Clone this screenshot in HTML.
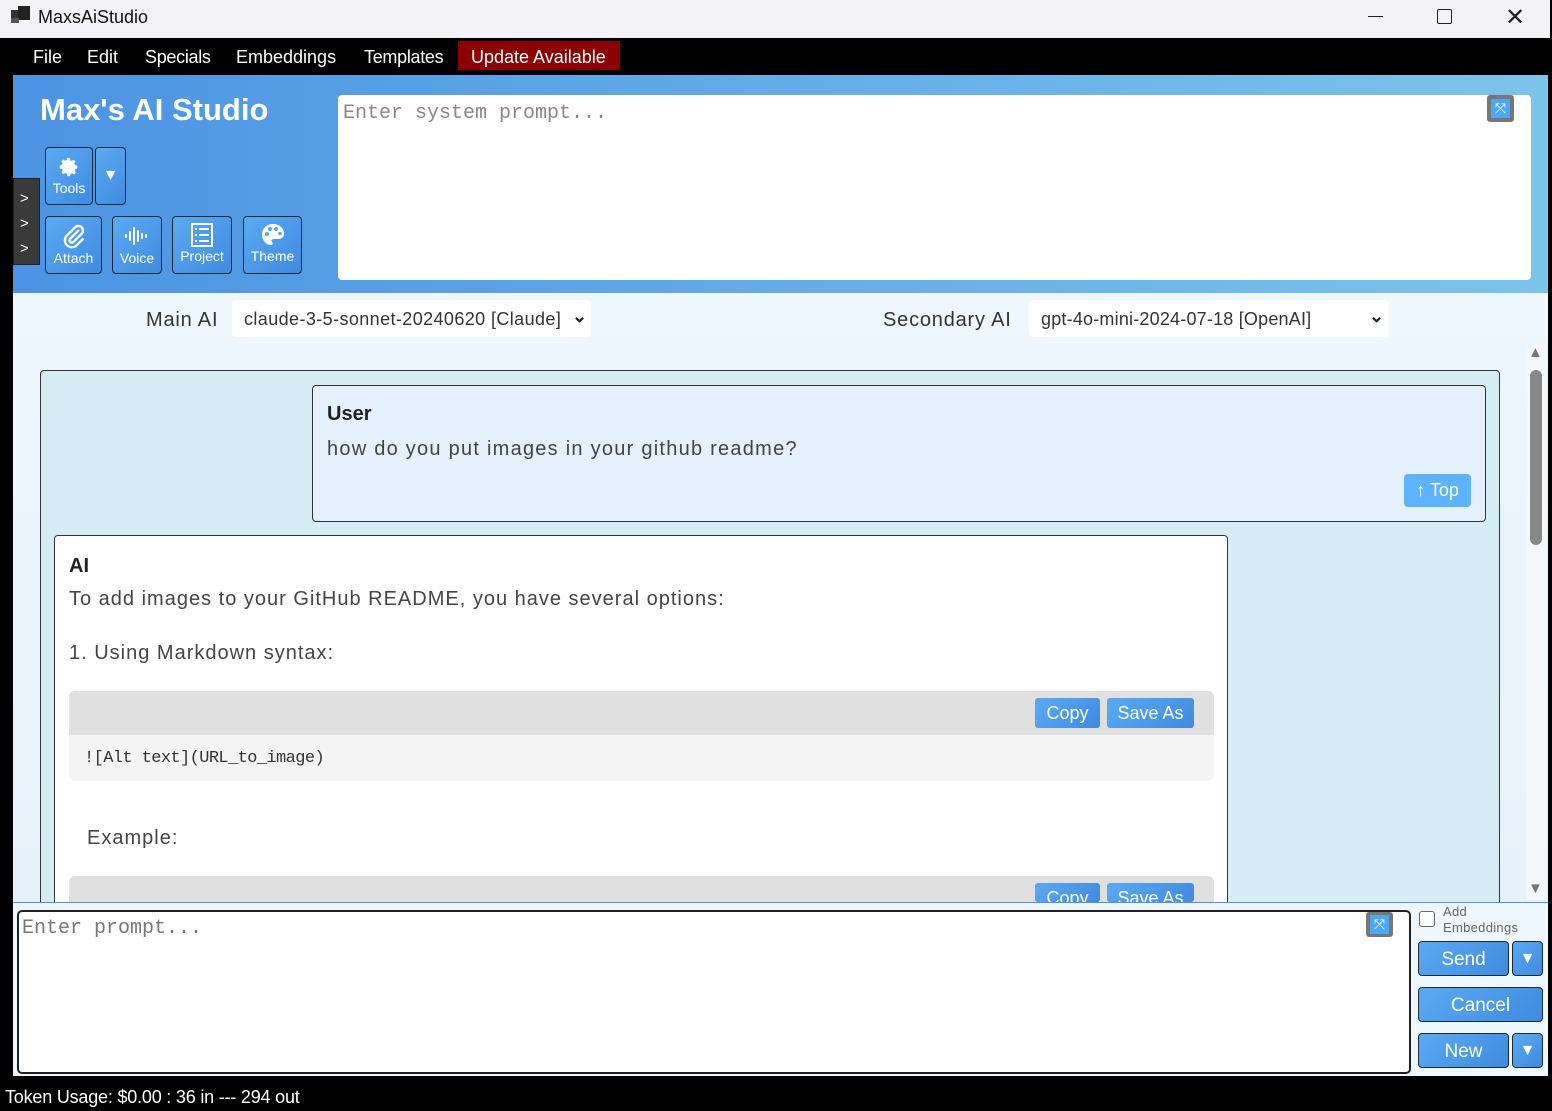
<!DOCTYPE html>
<html><head><meta charset="utf-8"><style>
*{box-sizing:border-box;margin:0;padding:0}
body{width:1552px;height:1111px;overflow:hidden;position:relative;background:#000;font-family:"Liberation Sans",sans-serif}
.abs{position:absolute}
.btn{position:absolute;background:linear-gradient(135deg,#5aaaf2,#3f8be0);border:1px solid #1a2a3a;border-radius:4px;color:#fff;text-align:center}
.cb{position:absolute;background:linear-gradient(135deg,#5aaaf2,#3f8be0);border-radius:3px;color:#fff;font-size:18px;text-align:center;line-height:30px;height:30px}
.mono{font-family:"Liberation Mono",monospace}
.t{letter-spacing:1px}
svg{display:block;margin:0 auto}
</style></head><body>
<!-- title bar -->
<div class="abs" style="left:0;top:0;width:1550px;height:38px;background:#f3f2f7"></div>
<div class="abs" style="left:11px;top:10px;width:8px;height:8px;background:#333"></div>
<div class="abs" style="left:18px;top:6px;width:12px;height:14px;background:#222"></div>
<div class="abs" style="left:11px;top:18px;width:8px;height:5px;background:#555"></div>
<div class="abs" style="left:38px;top:7px;font-size:18px;color:#111">MaxsAiStudio</div>
<div class="abs" style="left:1368px;top:16px;width:15px;height:1px;background:#222"></div>
<div class="abs" style="left:1437px;top:9px;width:15px;height:15px;border:1.5px solid #222;border-radius:2px"></div>
<div class="abs" style="left:1505px;top:3px;font-size:24px;color:#222">✕</div>
<!-- menu -->
<div class="abs" style="left:33px;top:47px;font-size:18px;color:#fff">File</div>
<div class="abs" style="left:87px;top:47px;font-size:18px;color:#fff">Edit</div>
<div class="abs" style="left:145px;top:47px;font-size:18px;color:#fff;letter-spacing:-0.3px">Specials</div>
<div class="abs" style="left:236px;top:47px;font-size:18px;color:#fff">Embeddings</div>
<div class="abs" style="left:364px;top:47px;font-size:18px;color:#fff;letter-spacing:-0.3px">Templates</div>
<div class="abs" style="left:458px;top:41px;width:162px;height:29px;background:#8b0000"></div>
<div class="abs" style="left:471px;top:47px;font-size:18px;color:#fff">Update Available</div>
<!-- header -->
<div class="abs" style="left:13px;top:75px;width:1535px;height:218px;background:linear-gradient(90deg,#4c93e3 0%,#5ea7e6 40%,#7cc4ea 100%)"></div>
<div class="abs" style="left:40px;top:92px;font-size:31px;font-weight:bold;color:#fff">Max's AI Studio</div>
<div class="abs" style="left:13px;top:178px;width:27px;height:87px;background:#3a3a3a;border:1px solid #222"></div>
<div class="abs" style="left:20px;top:186px;color:#fff;font-size:15px;line-height:25px">&gt;<br>&gt;<br>&gt;</div>
<div class="btn" style="left:45px;top:147px;width:48px;height:58px"><div style="margin-top:8px"><svg width="22" height="22" viewBox="0 0 24 24"><path fill="#fff" d="M12 8a4 4 0 1 0 0 8 4 4 0 0 0 0-8zm9 5.5v-3l-2.4-.5-.8-1.8 1.4-2-2.1-2.1-2 1.4-1.8-.8L13 2h-3l-.5 2.4-1.8.8-2-1.4-2.1 2.1 1.4 2-.8 1.8L2 10.5v3l2.4.5.8 1.8-1.4 2 2.1 2.1 2-1.4 1.8.8.5 2.7h3l.5-2.4 1.8-.8 2 1.4 2.1-2.1-1.4-2 .8-1.8z"/></svg></div><div style="font-size:14px;margin-top:2px">Tools</div></div>
<div class="btn" style="left:95px;top:147px;width:31px;height:58px;font-size:16px;line-height:56px">▼</div>
<div class="btn" style="left:45px;top:216px;width:57px;height:58px"><div style="margin-top:6px"><svg width="26" height="26" viewBox="0 0 24 24"><path fill="none" stroke="#fff" stroke-width="2.2" stroke-linecap="round" d="M16 7l-7.5 7.5a2 2 0 0 0 3 3L19 10a4 4 0 0 0-6-6l-7.5 7.5a6 6 0 0 0 9 9L20 15"/></svg></div><div style="font-size:14px;margin-top:1px">Attach</div></div>
<div class="btn" style="left:112px;top:216px;width:50px;height:58px"><div style="margin-top:8px"><svg width="26" height="22" viewBox="0 0 26 22"><g stroke="#fff" stroke-width="2" stroke-linecap="round"><path d="M2 10v2M6 7v8M10 3v16M14 6v10M18 9v4M22 10v2"/></g></svg></div><div style="font-size:14px;margin-top:3px">Voice</div></div>
<div class="btn" style="left:172px;top:216px;width:60px;height:58px"><div style="margin-top:6px"><svg width="24" height="24" viewBox="0 0 24 24"><rect x="2" y="1" width="20" height="22" fill="none" stroke="#fff" stroke-width="2"/><g fill="#fff"><rect x="5" y="5" width="2" height="2"/><rect x="9" y="5" width="10" height="2"/><rect x="5" y="11" width="2" height="2"/><rect x="9" y="11" width="10" height="2"/><rect x="5" y="17" width="2" height="2"/><rect x="9" y="17" width="10" height="2"/></g></svg></div><div style="font-size:14px;margin-top:1px">Project</div></div>
<div class="btn" style="left:243px;top:216px;width:59px;height:58px"><div style="margin-top:6px"><svg width="24" height="24" viewBox="0 0 24 24"><path fill="#fff" d="M12 1C6 1 1 5.5 1 11.5 1 17 5 22 10 22c2 0 2-2 1-3s-1-3 2-3h4c4 0 6-2 6-5.5C23 5 18 1 12 1z"/><g fill="#5aa5ec"><circle cx="6" cy="11" r="2"/><circle cx="9" cy="6" r="2"/><circle cx="15" cy="6" r="2"/><circle cx="19" cy="10.5" r="1.8"/></g></svg></div><div style="font-size:14px;margin-top:1px">Theme</div></div>
<div class="abs" style="left:338px;top:95px;width:1193px;height:185px;background:#fff;border-radius:4px"></div>
<div class="abs mono" style="left:343px;top:102px;font-size:20px;color:#888">Enter system prompt...</div>
<div class="abs" style="left:1487px;top:95px;width:27px;height:27px;background:#777;border-radius:3px"><div style="margin:4px;width:19px;height:19px;background:#4aa8f8;color:#fff;font-size:14px;text-align:center;line-height:19px">⤧</div></div>
<!-- content -->
<div class="abs" style="left:13px;top:293px;width:1535px;height:609px;background:linear-gradient(180deg,#eef6fe,#e6f2fb)"></div>
<div class="abs" style="left:146px;top:309px;font-size:20px;color:#333;letter-spacing:0.8px">Main AI</div>
<div class="abs" style="left:232px;top:300px;width:359px;height:37px;background:#fff;border-radius:4px"></div>
<div class="abs" style="left:244px;top:309px;font-size:18px;color:#333;letter-spacing:0.4px">claude-3-5-sonnet-20240620 [Claude]</div>
<div class="abs" style="left:572px;top:306px;font-size:18px;color:#222;font-weight:bold">⌄</div>
<div class="abs" style="left:883px;top:309px;font-size:20px;color:#333;letter-spacing:0.8px">Secondary AI</div>
<div class="abs" style="left:1029px;top:300px;width:360px;height:37px;background:#fff;border-radius:4px"></div>
<div class="abs" style="left:1041px;top:309px;font-size:18px;color:#333;letter-spacing:0.2px">gpt-4o-mini-2024-07-18 [OpenAI]</div>
<div class="abs" style="left:1369px;top:306px;font-size:18px;color:#222;font-weight:bold">⌄</div>
<div class="abs" style="left:1526px;top:345px;width:20px;height:555px;background:#f4f8fb"></div>
<div class="abs" style="left:1530px;top:370px;width:12px;height:175px;background:#888;border-radius:6px"></div>
<div class="abs" style="left:1528px;top:344px;font-size:15px;color:#777">▲</div>
<div class="abs" style="left:1528px;top:880px;font-size:15px;color:#777">▼</div>
<!-- chat -->
<div class="abs" style="left:40px;top:370px;width:1460px;height:540px;background:#d5edf4;border:1px solid #333;border-radius:4px"></div>
<div class="abs" style="left:312px;top:385px;width:1174px;height:137px;background:#e4f0fc;border:1px solid #333;border-radius:4px"></div>
<div class="abs" style="left:327px;top:403px;font-size:20px;font-weight:bold;color:#222">User</div>
<div class="abs t" style="left:327px;top:438px;font-size:20px;color:#444;letter-spacing:1.25px">how do you put images in your github readme?</div>
<div class="abs" style="left:1404px;top:474px;width:67px;height:33px;background:#5cb3ff;border-radius:4px;color:#fff;font-size:18px;text-align:center;line-height:33px">↑ Top</div>
<div class="abs" style="left:54px;top:535px;width:1174px;height:380px;background:#fff;border:1px solid #333;border-radius:4px"></div>
<div class="abs" style="left:69px;top:555px;font-size:20px;font-weight:bold;color:#222">AI</div>
<div class="abs t" style="left:69px;top:588px;font-size:20px;color:#444">To add images to your GitHub README, you have several options:</div>
<div class="abs t" style="left:69px;top:642px;font-size:20px;color:#444">1. Using Markdown syntax:</div>
<div class="abs" style="left:69px;top:691px;width:1145px;height:90px;background:#f4f4f4;border-radius:6px;overflow:hidden"><div style="height:44px;background:#e0e0e0"></div></div>
<div class="cb" style="left:1035px;top:698px;width:65px">Copy</div>
<div class="cb" style="left:1107px;top:698px;width:87px">Save As</div>
<div class="abs mono" style="left:84px;top:749px;font-size:17px;color:#333;letter-spacing:-0.6px">![Alt text](URL_to_image)</div>
<div class="abs t" style="left:87px;top:827px;font-size:20px;color:#444">Example:</div>
<div class="abs" style="left:69px;top:876px;width:1145px;height:26px;background:#e0e0e0;border-radius:6px 6px 0 0;overflow:hidden"></div>
<div class="cb" style="left:1035px;top:883px;width:65px;height:19px;overflow:hidden">Copy</div>
<div class="cb" style="left:1107px;top:883px;width:87px;height:19px;overflow:hidden">Save As</div>
<!-- input area -->
<div class="abs" style="left:13px;top:902px;width:1535px;height:174px;background:#eef6fe;border-top:1px solid #4a90e2"></div>
<div class="abs" style="left:17px;top:910px;width:1394px;height:164px;background:#fff;border:2px solid #222;border-radius:5px"></div>
<div class="abs mono" style="left:22px;top:917px;font-size:20px;color:#777">Enter prompt...</div>
<div class="abs" style="left:1366px;top:912px;width:27px;height:25px;background:#777;border-radius:3px"><div style="margin:3px 4px;width:19px;height:19px;background:#4aa8f8;color:#fff;font-size:14px;text-align:center;line-height:19px">⤧</div></div>
<div class="abs" style="left:1419px;top:911px;width:16px;height:16px;border:1px solid #666;border-radius:3px;background:#fff"></div>
<div class="abs" style="left:1443px;top:904px;font-size:13px;color:#666;line-height:16px;letter-spacing:0.3px">Add<br>Embeddings</div>
<div class="btn" style="left:1418px;top:941px;width:91px;height:35px;font-size:19px;line-height:36px">Send</div>
<div class="btn" style="left:1512px;top:941px;width:31px;height:35px;font-size:16px;line-height:34px">▼</div>
<div class="btn" style="left:1418px;top:987px;width:125px;height:35px;font-size:19px;line-height:36px">Cancel</div>
<div class="btn" style="left:1418px;top:1033px;width:91px;height:35px;font-size:19px;line-height:36px">New</div>
<div class="btn" style="left:1512px;top:1033px;width:31px;height:35px;font-size:16px;line-height:34px">▼</div>
<div class="abs" style="left:5px;top:1087px;font-size:18px;color:#fff;letter-spacing:-0.2px">Token Usage: $0.00 : 36 in --- 294 out</div>
</body></html>
